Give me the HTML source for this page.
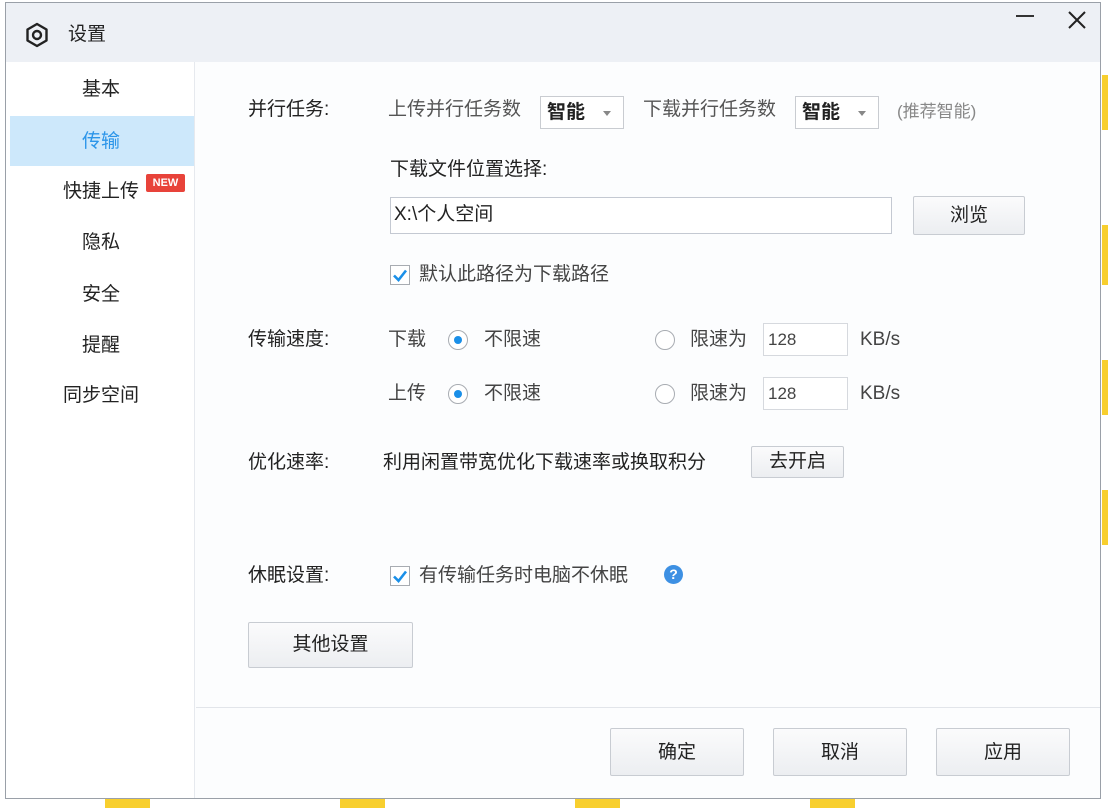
<!DOCTYPE html>
<html><head><meta charset="utf-8"><style>
*{margin:0;padding:0;box-sizing:border-box}
body{width:1108px;height:808px;background:#fff;position:relative;overflow:hidden;font-family:"Liberation Sans","Noto Sans CJK SC",sans-serif;font-size:19px;color:#222}
.a{position:absolute;white-space:nowrap;line-height:22px}
.win{position:absolute;left:5px;top:2px;width:1096px;height:797px;border:1px solid #9aa0a8;background:#fcfdfe}
.title{position:absolute;left:6px;top:3px;width:1094px;height:59px;background:#edf0f5}
.side{position:absolute;left:6px;top:62px;width:189px;height:736px;background:#fff;border-right:1px solid #e6e9ee}
.btn{position:absolute;border:1px solid #c8ccd2;border-radius:2px;background:linear-gradient(#fbfbfc,#eceef1);text-align:center;color:#222}
.sel{position:absolute;border:1px solid #c9ccd1;background:#fff;height:33px;width:84px;font-weight:bold;padding-left:6px;line-height:31px}
.sel:after{content:"";position:absolute;right:12px;top:14px;border:4px solid transparent;border-top:5px solid #888}
.inp{position:absolute;border:1px solid #d6d9de;background:#fff}
.radio{position:absolute;width:20px;height:20px;border:1px solid #a8acb2;border-radius:50%;background:#fff}
.radio.on:after{content:"";position:absolute;left:5px;top:5px;width:8px;height:8px;border-radius:50%;background:#1a8fe8}
.chk{position:absolute;width:20px;height:20px;border:1px solid #a8acb2;background:#fff}
.y{position:absolute;background:#f8cf2e}
</style></head><body>
<div class="y" style="left:105px;top:799px;width:45px;height:9px"></div>
<div class="y" style="left:340px;top:799px;width:45px;height:9px"></div>
<div class="y" style="left:575px;top:799px;width:45px;height:9px"></div>
<div class="y" style="left:810px;top:799px;width:45px;height:9px"></div>
<div class="y" style="left:1102px;top:75px;width:6px;height:55px"></div>
<div class="y" style="left:1102px;top:225px;width:6px;height:60px"></div>
<div class="y" style="left:1102px;top:360px;width:6px;height:55px"></div>
<div class="y" style="left:1102px;top:490px;width:6px;height:55px"></div>
<div class="win"></div>
<div class="title"></div>
<svg class="a" style="left:24px;top:22px" width="26" height="26" viewBox="0 0 26 26"><path d="M13 2 L22.5 7.5 L22.5 18.5 L13 24 L3.5 18.5 L3.5 7.5 Z" fill="none" stroke="#222" stroke-width="2.4" stroke-linejoin="round"/><circle cx="13" cy="13" r="4" fill="none" stroke="#222" stroke-width="2.4"/></svg>
<div class="a" style="left:68px;top:24px">设置</div>
<div class="a" style="left:1016px;top:15px;width:18px;height:1.5px;background:#333"></div>
<svg class="a" style="left:1068px;top:11px" width="18" height="18"><path d="M1 1L17 17M17 1L1 17" stroke="#222" stroke-width="2"/></svg>
<div class="side"></div>
<div class="a" style="left:10px;top:116px;width:184px;height:50px;background:#cde8fb"></div>
<div class="a" style="left:82px;top:79px">基本</div>
<div class="a" style="left:82px;top:131px;color:#2b95e9">传输</div>
<div class="a" style="left:63px;top:181px">快捷上传</div>
<div class="a" style="left:146px;top:174px;width:39px;height:18px;background:#e8433a;color:#fff;font-size:11px;font-weight:bold;line-height:18px;text-align:center;border-radius:2px">NEW</div>
<div class="a" style="left:82px;top:232px">隐私</div>
<div class="a" style="left:82px;top:284px">安全</div>
<div class="a" style="left:82px;top:335px">提醒</div>
<div class="a" style="left:63px;top:385px">同步空间</div>

<div class="a" style="left:248px;top:99px">并行任务:</div>
<div class="a" style="left:388px;top:99px;color:#555">上传并行任务数</div>
<div class="sel" style="left:540px;top:96px">智能</div>
<div class="a" style="left:643px;top:99px;color:#555">下载并行任务数</div>
<div class="sel" style="left:795px;top:96px">智能</div>
<div class="a" style="left:897px;top:101px;color:#888;font-size:17px">(推荐智能)</div>

<div class="a" style="left:390px;top:159px">下载文件位置选择:</div>
<div class="inp" style="left:390px;top:197px;width:502px;height:37px;border-color:#c4c9d2"></div>
<div class="a" style="left:394px;top:204px">X:\个人空间</div>
<div class="btn" style="left:913px;top:196px;width:112px;height:39px;line-height:37px">浏览</div>
<div class="chk" style="left:390px;top:265px"></div>
<svg class="a" style="left:392px;top:267px" width="16" height="16"><path d="M2 8.5L6.5 13L14 3.5" fill="none" stroke="#1a8fe8" stroke-width="2.6"/></svg>
<div class="a" style="left:419px;top:264px;color:#444">默认此路径为下载路径</div>

<div class="a" style="left:248px;top:329px">传输速度:</div>
<div class="a" style="left:388px;top:329px;color:#444">下载</div>
<div class="radio on" style="left:448px;top:330px"></div>
<div class="a" style="left:484px;top:329px;color:#444">不限速</div>
<div class="radio" style="left:655px;top:330px"></div>
<div class="a" style="left:690px;top:329px;color:#444">限速为</div>
<div class="inp" style="left:763px;top:323px;width:85px;height:33px"></div>
<div class="a" style="left:768px;top:329px;font-size:17px;color:#444">128</div>
<div class="a" style="left:860px;top:329px;color:#444">KB/s</div>

<div class="a" style="left:388px;top:383px;color:#444">上传</div>
<div class="radio on" style="left:448px;top:384px"></div>
<div class="a" style="left:484px;top:383px;color:#444">不限速</div>
<div class="radio" style="left:655px;top:384px"></div>
<div class="a" style="left:690px;top:383px;color:#444">限速为</div>
<div class="inp" style="left:763px;top:377px;width:85px;height:33px"></div>
<div class="a" style="left:768px;top:383px;font-size:17px;color:#444">128</div>
<div class="a" style="left:860px;top:383px;color:#444">KB/s</div>

<div class="a" style="left:248px;top:452px">优化速率:</div>
<div class="a" style="left:383px;top:452px">利用闲置带宽优化下载速率或换取积分</div>
<div class="btn" style="left:751px;top:446px;width:93px;height:32px;line-height:30px">去开启</div>

<div class="a" style="left:248px;top:565px">休眠设置:</div>
<div class="chk" style="left:390px;top:566px"></div>
<svg class="a" style="left:392px;top:568px" width="16" height="16"><path d="M2 8.5L6.5 13L14 3.5" fill="none" stroke="#1a8fe8" stroke-width="2.6"/></svg>
<div class="a" style="left:419px;top:565px;color:#444">有传输任务时电脑不休眠</div>
<div class="a" style="left:664px;top:565px;width:19px;height:19px;border-radius:50%;background:#3d90e3;color:#fff;font-size:14px;font-weight:bold;text-align:center;line-height:19px">?</div>

<div class="btn" style="left:248px;top:622px;width:165px;height:46px;line-height:44px">其他设置</div>
<div class="a" style="left:196px;top:707px;width:904px;height:1px;background:#e2e5ea"></div>
<div class="btn" style="left:610px;top:728px;width:134px;height:48px;line-height:48px">确定</div>
<div class="btn" style="left:773px;top:728px;width:134px;height:48px;line-height:48px">取消</div>
<div class="btn" style="left:936px;top:728px;width:134px;height:48px;line-height:48px">应用</div>
</body></html>
